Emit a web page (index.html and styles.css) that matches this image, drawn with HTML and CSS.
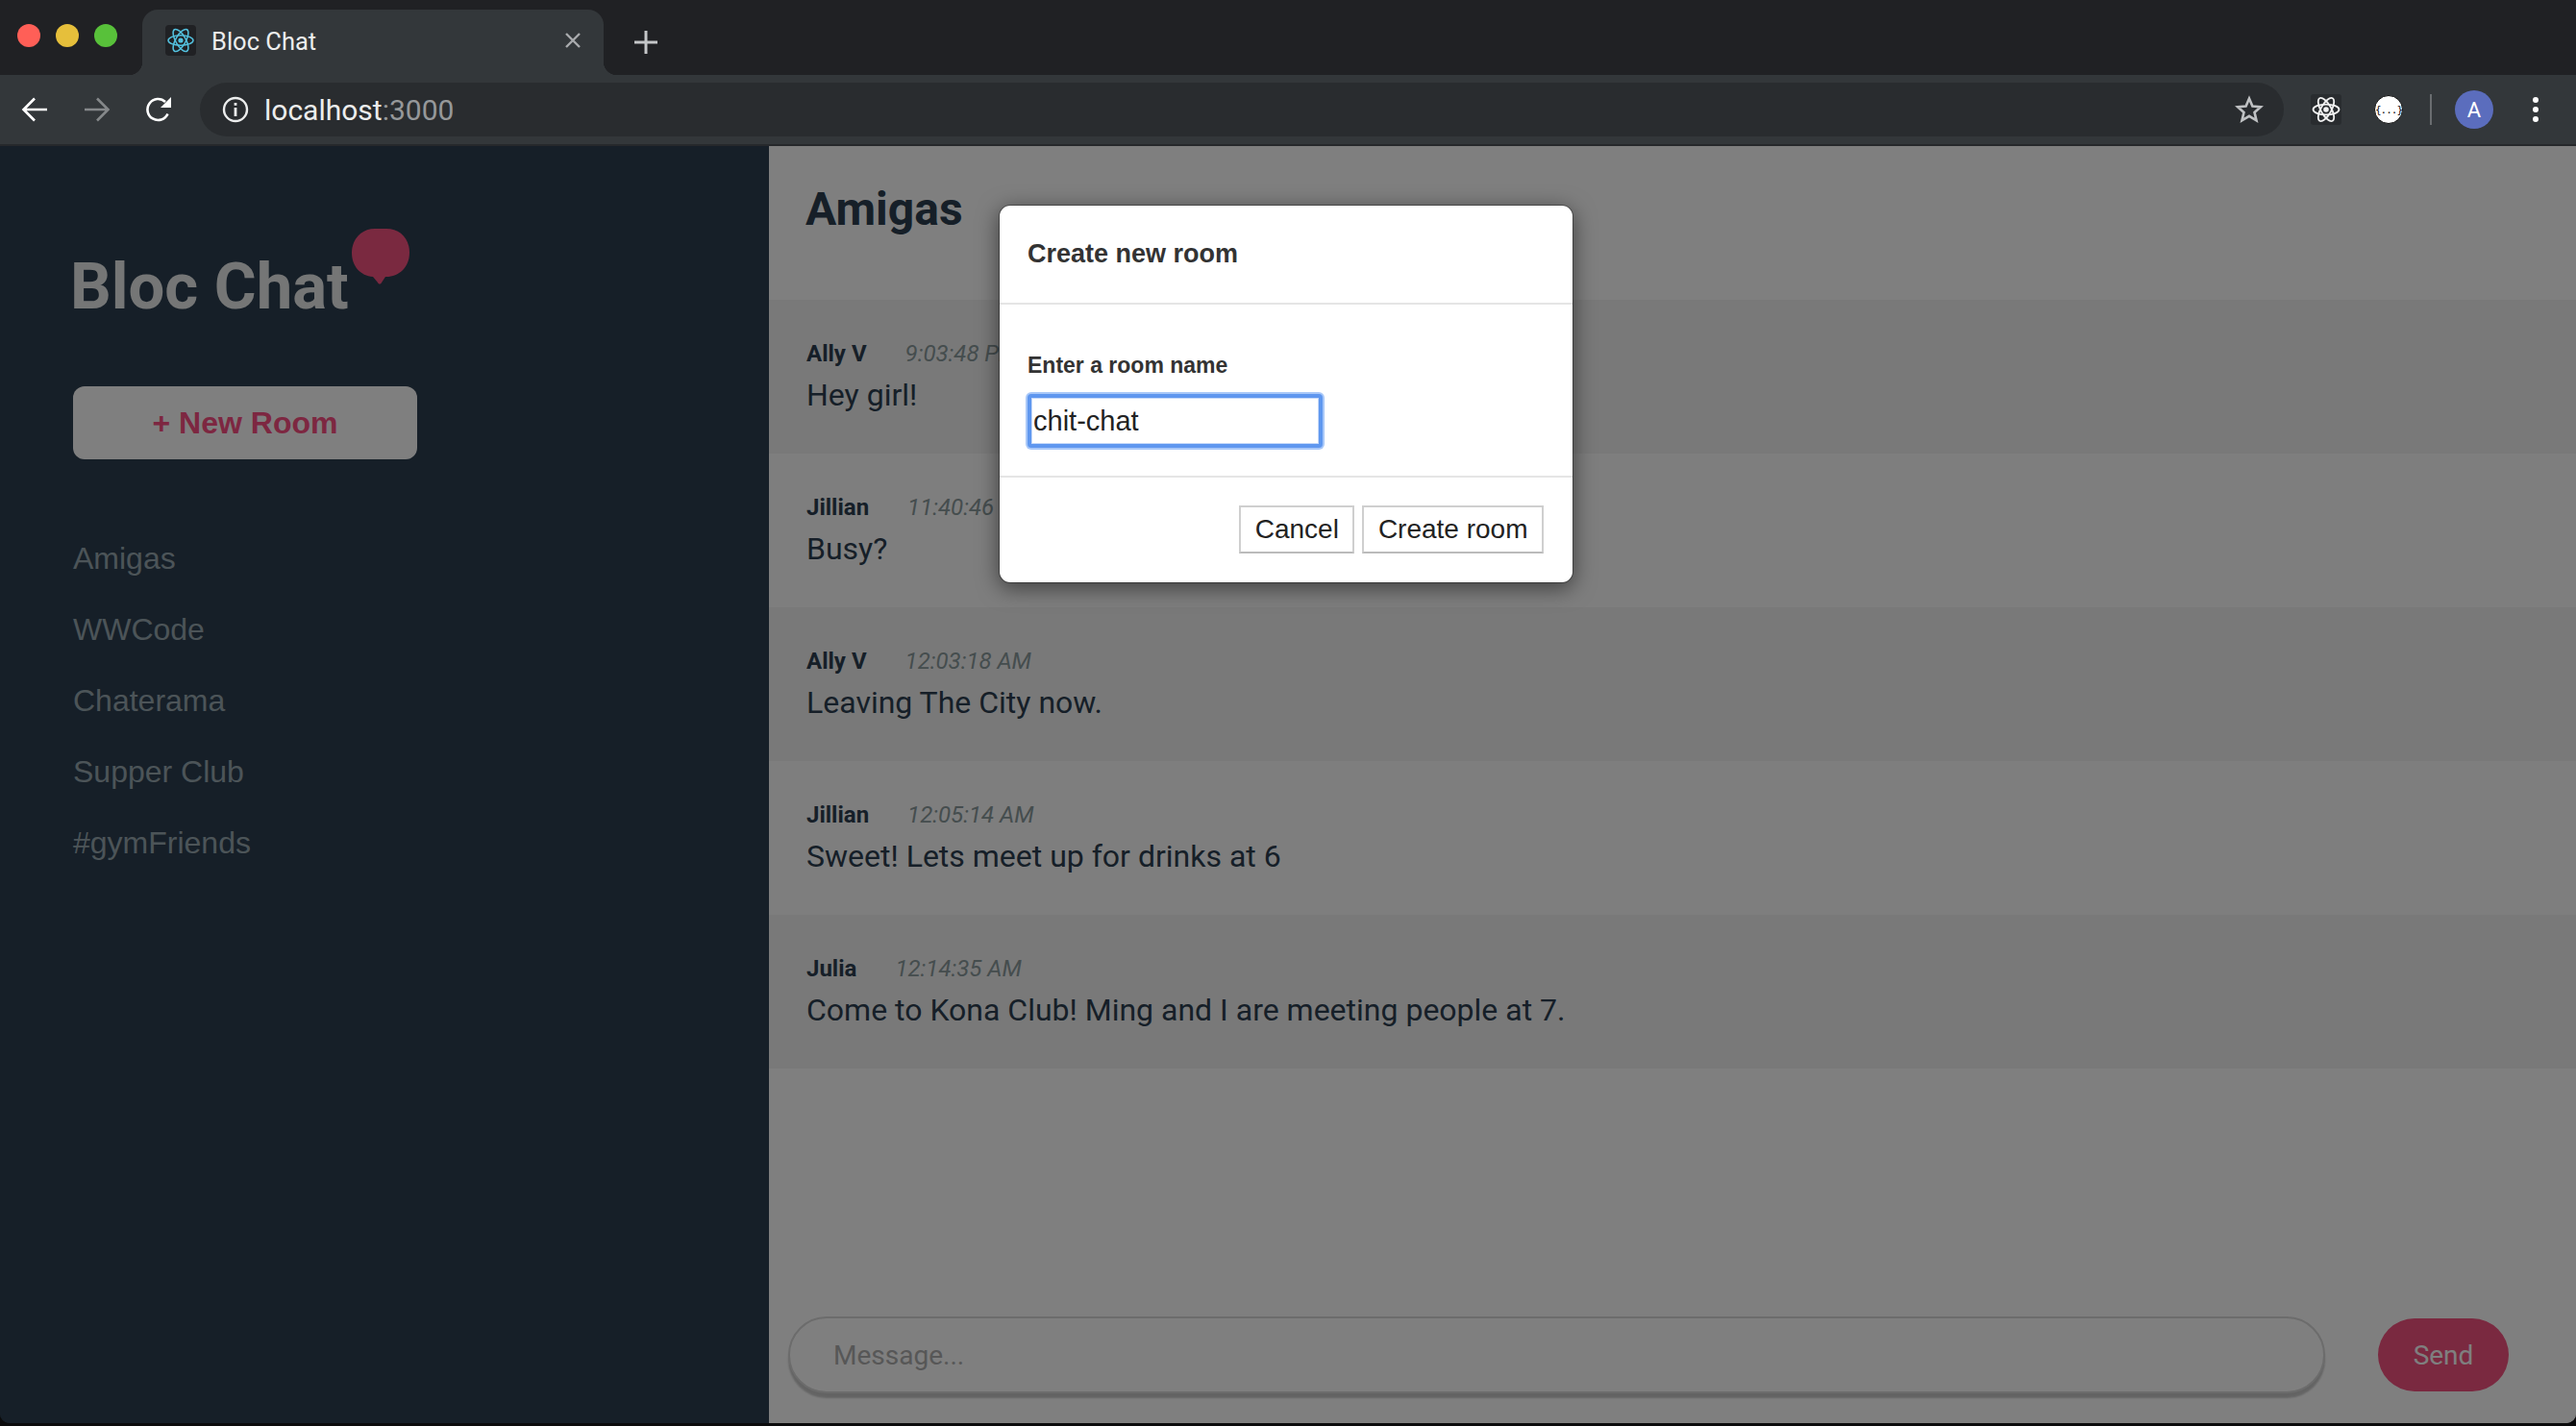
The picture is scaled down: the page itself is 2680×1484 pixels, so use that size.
FILE: index.html
```html
<!DOCTYPE html>
<html lang="en-US">
  <head>
    <title>Bloc Chat</title>
    <meta charset="utf-8" />
    <link rel="stylesheet" href="styles.css">
  </head>
  <body>
    <div class="window">
      <header class="tabstrip">
        <div class="lights">
          <span class="light red"></span>
          <span class="light yellow"></span>
          <span class="light green"></span>
        </div>
        <div class="tab">
          <span class="favicon">
            <svg width="28" height="28" viewBox="0 0 28 28" fill="none" stroke="#53c1de" stroke-width="1.5">
              <ellipse cx="14" cy="14" rx="13" ry="5.2" />
              <ellipse cx="14" cy="14" rx="13" ry="5.2" transform="rotate(60 14 14)" />
              <ellipse cx="14" cy="14" rx="13" ry="5.2" transform="rotate(120 14 14)" />
              <circle cx="14" cy="14" r="2.6" fill="#53c1de" stroke="none" />
            </svg>
          </span>
          <span class="tab-title">Bloc Chat</span>
          <svg class="tab-close" width="18" height="18" viewBox="0 0 18 18" stroke="#a9abad" stroke-width="2.4">
            <path d="M2 2l14 14M16 2L2 16" />
          </svg>
        </div>
        <svg class="new-tab" width="24" height="24" viewBox="0 0 24 24" stroke="#c4c6c8" stroke-width="3">
          <path d="M12 0v24M0 12h24" />
        </svg>
      </header>

      <div class="toolbar">
        <svg class="nav-icon" width="28" height="26" viewBox="0 0 28 26" fill="none" stroke="#fff" stroke-width="2.6">
          <path d="M27 13H3M14 1.5L2.5 13 14 24.5" />
        </svg>
        <svg class="nav-icon" width="28" height="26" viewBox="0 0 28 26" fill="none" stroke="#85888a" stroke-width="2.6">
          <path d="M1 13h24M14 1.5L25.5 13 14 24.5" />
        </svg>
        <svg class="nav-icon" width="28" height="28" viewBox="0 0 28 28" fill="none">
          <path d="M23.5 18.5A11 11 0 1 1 21 6" stroke="#fff" stroke-width="2.6" />
          <path d="M27 1v11H16z" fill="#fff" />
        </svg>
        <div class="omnibox">
          <svg width="28" height="28" viewBox="0 0 28 28" fill="none">
            <circle cx="14" cy="14" r="12" stroke="#eceded" stroke-width="2.4" />
            <rect x="12.6" y="12" width="2.8" height="9" fill="#eceded" />
            <rect x="12.6" y="7" width="2.8" height="2.8" fill="#eceded" />
          </svg>
          <span class="url">localhost<span class="url-port">:3000</span></span>
          <svg class="star" width="30" height="30" viewBox="0 0 30 30" fill="none" stroke="#bfc1c3" stroke-width="2.6">
            <path d="M15 3.5l3.4 8 8.6.7-6.5 5.7 2 8.4-7.5-4.500-7.500 4.500 2-8.400L3 12.200l8.600-.7z" />
          </svg>
        </div>
        <span class="ext-react">
          <svg width="30" height="28" viewBox="0 0 30 28" fill="none" stroke="#f1f1f1" stroke-width="1.8">
            <ellipse cx="15" cy="14" rx="13.500" ry="5.400" />
            <ellipse cx="15" cy="14" rx="13.500" ry="5.400" transform="rotate(60 15 14)" />
            <ellipse cx="15" cy="14" rx="13.500" ry="5.400" transform="rotate(120 15 14)" />
            <circle cx="15" cy="14" r="2.800" fill="#f1f1f1" stroke="none" />
          </svg>
        </span>
        <span class="ext-json">{...}</span>
        <span class="toolbar-divider"></span>
        <span class="avatar">A</span>
        <span class="menu-dots"><i></i><i></i><i></i></span>
      </div>

      <div class="app">
        <aside class="sidebar">
          <div class="logo">
            <span class="logo-text">Bloc Chat</span>
            <svg class="logo-bubble" width="60" height="58" viewBox="0 0 60 58">
              <path d="M24 0h12c14 0 24 10 24 25S49 50 36 50h-1l-4 6c-1 2-3 2-4 0l-5-6C9 49 0 39 0 25S10 0 24 0z" />
            </svg>
          </div>
          <button class="new-room">+ New Room</button>
          <ul class="rooms">
            <li>Amigas</li>
            <li>WWCode</li>
            <li>Chaterama</li>
            <li>Supper Club</li>
            <li>#gymFriends</li>
          </ul>
        </aside>

        <main class="chat">
          <h1 class="room-title">Amigas</h1>
          <div class="messages">
            <div class="message">
              <div class="meta"><b>Ally V</b><i>9:03:48 PM</i></div>
              <p>Hey girl!</p>
            </div>
            <div class="message">
              <div class="meta"><b>Jillian</b><i>11:40:46 PM</i></div>
              <p>Busy?</p>
            </div>
            <div class="message">
              <div class="meta"><b>Ally V</b><i>12:03:18 AM</i></div>
              <p>Leaving The City now.</p>
            </div>
            <div class="message">
              <div class="meta"><b>Jillian</b><i>12:05:14 AM</i></div>
              <p>Sweet! Lets meet up for drinks at 6</p>
            </div>
            <div class="message">
              <div class="meta"><b>Julia</b><i>12:14:35 AM</i></div>
              <p>Come to Kona Club! Ming and I are meeting people at 7.</p>
            </div>
          </div>
          <form class="composer">
            <input class="composer-input" type="text" placeholder="Message..." />
            <button class="send" type="button">Send</button>
          </form>
        </main>

        <div class="backdrop">
          <div class="modal">
            <div class="modal-header">Create new room</div>
            <div class="modal-body">
              <label for="room-name">Enter a room name</label>
              <input id="room-name" type="text" value="chit-chat" />
            </div>
            <div class="modal-footer">
              <button>Cancel</button>
              <button>Create room</button>
            </div>
          </div>
        </div>
      </div>
    </div>
  </body>
</html>
```

FILE: styles.css
```css
html {
  box-sizing: border-box;
}
*,
*::before,
*::after {
  box-sizing: inherit;
}
body {
  margin: 0;
  height: 1484px;
  overflow: hidden;
  background: #0b0b0c;
  font-family: "Liberation Sans", Arial, sans-serif;
}
.window {
  display: flex;
  flex-direction: column;
  height: 1481px;
  border-radius: 0 0 10px 10px;
  overflow: hidden;
}

/* browser chrome */
.tabstrip {
  display: flex;
  align-items: flex-end;
  flex: none;
  height: 78px;
  background: #202124;
}
.lights {
  display: flex;
  gap: 16px;
  align-self: flex-start;
  margin: 25px 26px 0 18px;
}
.light {
  width: 24px;
  height: 24px;
  border-radius: 50%;
}
.red {
  background: #ff5f57;
}
.yellow {
  background: #e6bf3b;
}
.green {
  background: #58c13a;
}
.tab {
  position: relative;
  display: flex;
  align-items: center;
  width: 480px;
  height: 68px;
  padding: 0 23px 4px 24px;
  background: #33373a;
  border-radius: 16px 16px 0 0;
}
.tab::before,
.tab::after {
  content: "";
  position: absolute;
  bottom: 0;
  width: 14px;
  height: 14px;
}
.tab::before {
  left: -14px;
  background: radial-gradient(circle at 0 0, #202124 14px, #33373a 14.5px);
}
.tab::after {
  right: -14px;
  background: radial-gradient(circle at 100% 0, #202124 14px, #33373a 14.5px);
}
.favicon {
  display: flex;
  align-items: center;
  justify-content: center;
  width: 32px;
  height: 32px;
  background: #202124;
  border-radius: 4px;
}
.tab-title {
  margin-left: 16px;
  padding-top: 2px;
  color: #eceded;
  font-family: Roboto, sans-serif;
  font-size: 25.5px;
}
.tab-close {
  margin-left: auto;
}
.new-tab {
  align-self: flex-start;
  margin: 32px 0 0 32px;
}
.toolbar {
  display: flex;
  align-items: center;
  flex: none;
  height: 74px;
  padding-left: 22px;
  background: #33373a;
  border-bottom: 2px solid #26282b;
}
.nav-icon {
  margin-right: 37px;
}
.toolbar .nav-icon:nth-child(3) {
  margin-right: 29px;
  margin-left: -1px;
}
.omnibox {
  display: flex;
  align-items: center;
  width: 2168px;
  height: 56px;
  padding: 0 21px 0 23px;
  background: #292c2f;
  border-radius: 28px;
}
.url {
  margin-left: 16px;
  color: #eceded;
  font-family: Roboto, sans-serif;
  font-size: 30px;
}
.url-port {
  color: #96989a;
}
.star {
  margin-left: auto;
}
.ext-react {
  display: flex;
  align-items: center;
  justify-content: center;
  width: 32px;
  height: 32px;
  margin-left: 28px;
  background: #292c2f;
  border-radius: 3px;
}
.ext-json {
  display: flex;
  align-items: center;
  justify-content: center;
  width: 30px;
  height: 30px;
  margin-left: 34px;
  background: #fff;
  border: 1px solid #111;
  border-radius: 50%;
  color: #111;
  font-family: "DejaVu Sans Mono", monospace;
  font-size: 11px;
  letter-spacing: -1px;
}
.toolbar-divider {
  width: 2px;
  height: 32px;
  margin-left: 28px;
  background: #6a6d70;
}
.avatar {
  display: flex;
  align-items: center;
  justify-content: center;
  width: 40px;
  height: 40px;
  margin-left: 24px;
  background: #5b6dbd;
  border-radius: 50%;
  color: #fff;
  font-family: Roboto, sans-serif;
  font-size: 22px;
}
.menu-dots {
  display: flex;
  flex-direction: column;
  gap: 4px;
  margin-left: 41px;
}
.menu-dots i {
  width: 6px;
  height: 6px;
  background: #fff;
  border-radius: 50%;
}

/* chat app */
.app {
  position: relative;
  display: flex;
  flex: 1;
  min-height: 0;
}
.sidebar {
  flex: none;
  width: 800px;
  padding: 86px 0 0 76px;
  background: #2c3e50;
}
.logo {
  display: flex;
  align-items: flex-start;
}
.logo-text {
  margin: 26px 0 0 -3px;
  color: #ebeded;
  font-family: Roboto, sans-serif;
  font-size: 67px;
  font-weight: 700;
  line-height: 68px;
}
.logo-bubble {
  margin-left: 3px;
  fill: #f45280;
}
.new-room {
  display: block;
  width: 358px;
  height: 76px;
  margin-top: 70px;
  padding: 0;
  background: #fff;
  border: none;
  border-radius: 12px;
  color: #fb4e82;
  font-family: inherit;
  font-size: 32px;
  font-weight: 700;
}
.rooms {
  margin: 66px 0 0;
  padding: 0;
  list-style: none;
  color: #98a9b1;
  font-size: 32px;
  line-height: 74px;
}
.chat {
  display: flex;
  flex-direction: column;
  flex: 1;
  min-width: 0;
  background: #fff;
  font-family: Roboto, sans-serif;
}
.room-title {
  height: 160px;
  margin: 0;
  padding: 34px 0 0 38px;
  color: #2c3e50;
  font-size: 48px;
  font-weight: 700;
  line-height: 64px;
}
.messages {
  flex: 1;
}
.message {
  height: 160px;
  padding: 42px 0 0 39px;
}
.message:nth-child(odd) {
  background: #f3f3f3;
}
.message:nth-child(even) {
  background: #fcfcfc;
}
.meta {
  display: flex;
  gap: 40px;
  color: #2c3e50;
  font-size: 24px;
  line-height: 28px;
}
.meta i {
  color: #8a9a9c;
}
.message p {
  margin: 7px 0 0;
  color: #2c3e50;
  font-size: 32px;
  line-height: 44px;
}
.composer {
  display: flex;
  align-items: flex-start;
  height: 111px;
  padding-left: 20px;
}
.composer-input {
  width: 1599px;
  height: 80px;
  padding: 0 0 0 45px;
  background: #fff;
  border: 2px solid #d8d8d8;
  border-radius: 40px;
  box-shadow: 0 5px 2px rgba(0, 0, 0, 0.22);
  font-family: inherit;
  font-size: 28px;
}
.composer-input::placeholder {
  color: #aeaeae;
}
.send {
  width: 136px;
  height: 76px;
  margin: 2px 0 0 55px;
  background: #f45280;
  border: none;
  border-radius: 38px;
  color: #fff;
  font-family: inherit;
  font-size: 28px;
}

/* modal */
.backdrop {
  position: absolute;
  inset: 0;
  display: flex;
  justify-content: center;
  align-items: flex-start;
  padding: 61px 4px 0 0;
  background: rgba(0, 0, 0, 0.5);
}
.modal {
  width: 598px;
  background: #fff;
  border: 1px solid rgba(0, 0, 0, 0.3);
  border-radius: 12px;
  background-clip: padding-box;
  box-shadow: 0 5px 22px rgba(0, 0, 0, 0.5);
  color: #333;
}
.modal-header {
  height: 103px;
  padding-left: 29px;
  border-bottom: 2px solid #e5e5e5;
  font-size: 27px;
  font-weight: 700;
  line-height: 101px;
}
.modal-body {
  height: 180px;
  padding: 48px 0 0 29px;
  border-bottom: 2px solid #e5e5e5;
}
.modal-body label {
  display: block;
  font-size: 23px;
  font-weight: 700;
  line-height: 30px;
}
.modal-body input {
  display: block;
  width: 307px;
  height: 56px;
  margin-top: 15px;
  padding: 0 0 0 2px;
  background: #fff;
  border: 4px solid #5f97ef;
  border-radius: 4px;
  box-shadow: inset 0 0 0 1px #c6d9f8, 0 0 0 2px #a9c8f8;
  outline: none;
  color: #222;
  font-family: inherit;
  font-size: 29px;
}
.modal-footer {
  display: flex;
  justify-content: flex-end;
  gap: 8px;
  height: 109px;
  padding: 29px 30px 0 0;
}
.modal-footer button {
  height: 50px;
  padding: 0 14.5px;
  background: #fff;
  border: 2px solid #cfcfcf;
  border-bottom-color: #bbb;
  color: #222;
  font-family: inherit;
  font-size: 28px;
}
```
